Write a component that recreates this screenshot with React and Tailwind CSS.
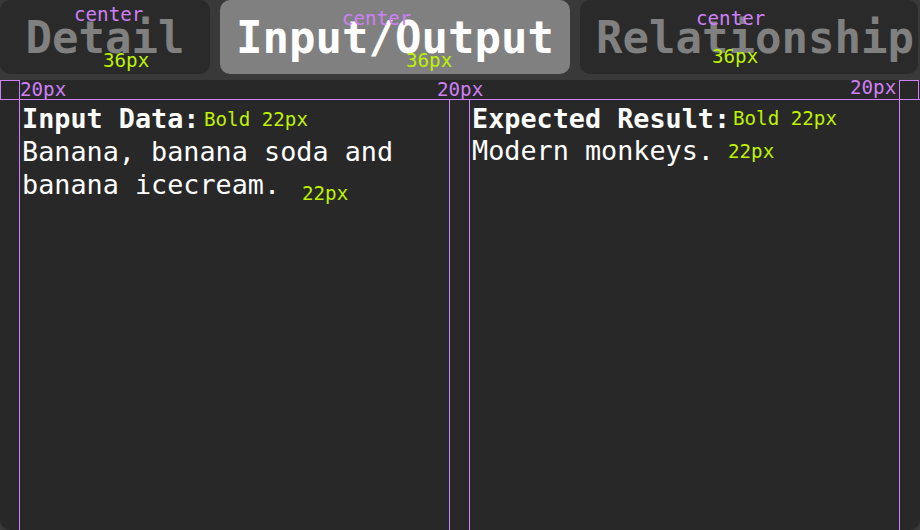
const mono = { fontFamily: '"DejaVu Sans Mono", "Liberation Mono", monospace' };

const tabs = [
  { label: "Detail", w: "w-[210px]", pad: "", active: false },
  { label: "Input/Output", w: "w-[350px]", pad: "", active: true },
  { label: "Relationship", w: "w-[338px]", pad: "pl-[12px]", active: false },
];

function Note({ className, children, violet }) {
  return (
    <span
      className={`absolute text-[19.2px] leading-none whitespace-nowrap ${
        violet ? "text-[#cf7ff7]" : "text-[#bdf200]"
      } ${className}`}
    >
      {children}
    </span>
  );
}

export default function App() {
  return (
    <div
      className="relative w-[920px] h-[530px] overflow-hidden bg-[#393939] flex flex-col gap-[6px]"
      style={mono}
    >
      {/* tabs */}
      <div className="flex gap-[10px] h-[74px] shrink-0">
        {tabs.map((t) => (
          <div
            key={t.label}
            className={`${t.w} ${t.pad} shrink-0 rounded-[10px] flex items-center justify-center whitespace-nowrap text-[44px] font-bold leading-none ${
              t.active ? "bg-[#808080] text-white" : "bg-[#2a2a2a] text-[#808080]"
            }`}
          >
            <span className="pt-[2px]">{t.label}</span>
          </div>
        ))}
      </div>

      {/* panel */}
      <div className="flex-1 bg-[#282828] rounded-b-[10px] flex gap-[20px] px-[20px] pt-[20px]">
        <div className="w-[430px] px-[2px] pt-[2px] text-white text-[26.8px] leading-[33px]">
          <div className="font-bold">Input Data:</div>
          <div>Banana, banana soda and banana icecream.</div>
        </div>
        <div className="w-[430px] px-[2px] pt-[2px] text-white text-[26.8px] leading-[33px]">
          <div className="font-bold">Expected Result:</div>
          <div className="-mt-[1px]">Modern monkeys.</div>
        </div>
      </div>

      {/* spacing guides */}
      <div className="absolute left-0 top-[99px] w-[920px] h-px bg-[#cf7ff7]" />
      <div className="absolute left-0 top-[80px] w-[20px] h-[20px] border border-[#cf7ff7]" />
      <div className="absolute left-[899px] top-[80px] w-[20px] h-[20px] border border-[#cf7ff7]" />
      <div className="absolute left-[19px] top-[80px] w-px h-[450px] bg-[#cf7ff7]" />
      <div className="absolute left-[899px] top-[80px] w-px h-[450px] bg-[#cf7ff7]" />
      <div className="absolute left-[449px] top-[99px] w-px h-[431px] bg-[#cf7ff7]" />
      <div className="absolute left-[469px] top-[99px] w-px h-[431px] bg-[#cf7ff7]" />

      <Note violet className="left-[74px] top-[5px]">center</Note>
      <Note violet className="left-[342px] top-[9px]">center</Note>
      <Note violet className="left-[696px] top-[9px]">center</Note>
      <Note className="left-[103px] top-[51px]">36px</Note>
      <Note className="left-[406px] top-[51px]">36px</Note>
      <Note className="left-[712px] top-[47px]">36px</Note>
      <Note violet className="left-[20px] top-[80px]">20px</Note>
      <Note violet className="left-[437px] top-[80px]">20px</Note>
      <Note violet className="left-[850px] top-[78px]">20px</Note>
      <Note className="left-[204px] top-[110px]">Bold 22px</Note>
      <Note className="left-[733px] top-[109px]">Bold 22px</Note>
      <Note className="left-[302px] top-[184px]">22px</Note>
      <Note className="left-[728px] top-[142px]">22px</Note>
    </div>
  );
}
